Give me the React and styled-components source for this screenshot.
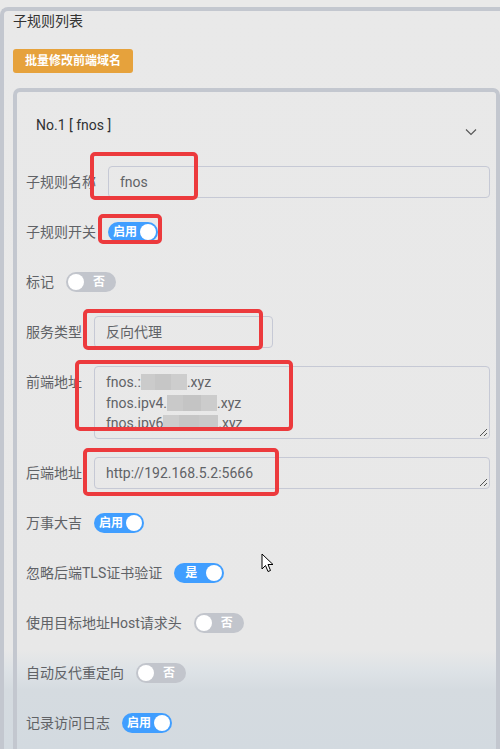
import React from "react";
import styled, { createGlobalStyle } from "styled-components";

const GlobalStyle = createGlobalStyle`
  html, body {
    margin: 0;
    padding: 0;
    overflow: hidden;
    background: #e8e8e8;
  }
  body {
    font-family: Roboto, "Noto Sans CJK SC", sans-serif;
  }
  * { box-sizing: border-box; }
`;

const Page = styled.div`
  position: relative;
  width: 500px;
  height: 749px;
  overflow: hidden;
  padding-top: 7px;
  background: linear-gradient(
    to bottom,
    #e9e9e9 0px,
    #e8e8e8 650px,
    #dde2e6 672px,
    #d5dbe0 690px,
    #d3dae0 749px
  );
`;

const Panel = styled.section`
  border: 4px solid #c3c7cf;
  border-right: none;
  border-bottom: none;
  border-radius: 8px 0 0 0;
  padding: 0 0 0 9px;
  height: 760px;
`;

const Title = styled.div`
  font-size: 14px;
  line-height: 20px;
  color: #333;
`;

const BatchButton = styled.button`
  display: block;
  margin-top: 18px;
  height: 24px;
  padding: 0 12px;
  border: none;
  border-radius: 3px;
  background: #e6a23c;
  color: #fff;
  font-family: Roboto, "Noto Sans CJK SC", sans-serif;
  font-size: 12px;
  font-weight: 700;
  line-height: 24px;
`;

const Card = styled.div`
  margin-top: 15px;
  border: 4px solid #c3c7cf;
  border-bottom: none;
  border-radius: 7px 7px 0 0;
  padding-top: 9px;
  height: 700px;
`;

const CardHeader = styled.div`
  display: flex;
  align-items: center;
  justify-content: space-between;
  height: 48px;
  padding: 0 19px;
  font-size: 14px;
  color: #303133;
`;

const Chevron = styled.svg`
  margin-top: 14px;
`;

const Form = styled.div`
  margin-top: 17px;
  padding: 0 6px 0 9px;
`;

const FormItem = styled.div`
  display: flex;
  align-items: flex-start;
  margin-bottom: 18px;
`;

const Label = styled.label`
  font-size: 14px;
  line-height: 32px;
  padding-right: 12px;
  color: #606266;
  white-space: nowrap;
`;

const Input = styled.div`
  height: 32px;
  ${(p) => (p.$width ? `width: ${p.$width}px;` : "flex: 1;")}
  border: 1px solid #c6c9d5;
  border-radius: 4px;
  padding: 0 ${(p) => p.$pad || 11}px;
  font-size: 14px;
  line-height: 30px;
  color: #606266;
`;

const TextArea = styled.div`
  position: relative;
  flex: 1;
  height: ${(p) => p.$height}px;
  border: 1px solid #c6c9d5;
  border-radius: 4px;
  padding: ${(p) => p.$padTop}px 11px 0;
  font-size: 14px;
  line-height: ${(p) => p.$lh}px;
  color: #606266;
  overflow: hidden;
`;

const Line = styled.div`
  white-space: nowrap;
  display: flex;
  align-items: center;
`;

const Mosaic = styled.span`
  display: inline-flex;
  height: 16px;
`;

const MosaicCell = styled.span`
  display: inline-block;
  height: 16px;
  width: ${(p) => p.$w}px;
  background: ${(p) => p.$c};
`;

const Grip = styled.svg`
  position: absolute;
  right: 1px;
  bottom: 1px;
`;

const ToggleWrap = styled.div`
  height: 32px;
  display: flex;
  align-items: center;
`;

const Track = styled.div`
  width: 50px;
  height: 20px;
  border-radius: 10px;
  background: ${(p) => (p.$on ? "#409eff" : "#c2c5cc")};
  display: flex;
  flex-direction: ${(p) => (p.$on ? "row" : "row-reverse")};
  align-items: center;
  padding: 0 2px;
`;

const TrackText = styled.span`
  flex: 1;
  text-align: center;
  color: #fff;
  font-size: 12px;
  font-weight: 700;
  line-height: 20px;
`;

const Knob = styled.span`
  width: 16px;
  height: 16px;
  border-radius: 50%;
  background: #fff;
  flex: none;
`;

const Mark = styled.div`
  position: absolute;
  border: 4px solid #ec3a3d;
  border-radius: 5px;
  pointer-events: none;
`;

const Cursor = styled.svg`
  position: absolute;
  left: 261px;
  top: 553px;
`;

function Toggle({ on, text }) {
  return (
    <ToggleWrap>
      <Track $on={on}>
        <TrackText>{text}</TrackText>
        <Knob />
      </Track>
    </ToggleWrap>
  );
}

function Blur({ cells }) {
  return (
    <Mosaic>
      {cells.map((c, i) => (
        <MosaicCell key={i} $w={c[0]} $c={c[1]} />
      ))}
    </Mosaic>
  );
}

function ResizeGrip() {
  return (
    <Grip width="9" height="9" viewBox="0 0 9 9">
      <path d="M8 1 L1 8 M8 5 L5 8" stroke="#555" strokeWidth="1" />
    </Grip>
  );
}

const marks = [
  { l: 90, t: 152, w: 108, h: 48 },
  { l: 98, t: 214, w: 64, h: 30 },
  { l: 83, t: 309, w: 180, h: 41 },
  { l: 75, t: 360, w: 218, h: 71 },
  { l: 83, t: 448, w: 196, h: 48 },
];

export default function App() {
  return (
    <>
      <GlobalStyle />
      <Page>
        <Panel>
          <Title>子规则列表</Title>
          <BatchButton>批量修改前端域名</BatchButton>
          <Card>
            <CardHeader>
              <span>No.1 [ fnos ]</span>
              <Chevron width="12" height="8" viewBox="0 0 12 8">
                <polyline points="1,1.5 6,6.5 11,1.5" fill="none" stroke="#555" strokeWidth="1.1" />
              </Chevron>
            </CardHeader>
            <Form>
              <FormItem>
                <Label>子规则名称</Label>
                <Input>fnos</Input>
              </FormItem>
              <FormItem>
                <Label>子规则开关</Label>
                <Toggle on text="启用" />
              </FormItem>
              <FormItem>
                <Label>标记</Label>
                <Toggle text="否" />
              </FormItem>
              <FormItem>
                <Label>服务类型</Label>
                <Input $width={179} $pad={11}>反向代理</Input>
              </FormItem>
              <FormItem>
                <Label>前端地址</Label>
                <TextArea $height={73} $padTop={5} $lh={20.5}>
                  <Line>
                    fnos.:
                    <Blur cells={[[14, "#cbcbcb"], [16, "#c6c6c6"], [16, "#cdcdcd"]]} />
                    .xyz
                  </Line>
                  <Line>
                    fnos.ipv4.
                    <Blur cells={[[16, "#c9c9c9"], [18, "#c4c4c4"], [16, "#cccccc"]]} />
                    .xyz
                  </Line>
                  <Line>
                    fnos.ipv6
                    <Blur cells={[[16, "#cdcdcd"], [20, "#c6c6c6"], [19, "#c9c9c9"]]} />
                    .xyz
                  </Line>
                  <ResizeGrip />
                </TextArea>
              </FormItem>
              <FormItem>
                <Label>后端地址</Label>
                <TextArea $height={32} $padTop={5} $lh={20}>
                  http://192.168.5.2:5666
                  <ResizeGrip />
                </TextArea>
              </FormItem>
              <FormItem>
                <Label>万事大吉</Label>
                <Toggle on text="启用" />
              </FormItem>
              <FormItem>
                <Label>忽略后端TLS证书验证</Label>
                <Toggle on text="是" />
              </FormItem>
              <FormItem>
                <Label>使用目标地址Host请求头</Label>
                <Toggle text="否" />
              </FormItem>
              <FormItem>
                <Label>自动反代重定向</Label>
                <Toggle text="否" />
              </FormItem>
              <FormItem>
                <Label>记录访问日志</Label>
                <Toggle on text="启用" />
              </FormItem>
            </Form>
          </Card>
        </Panel>
        {marks.map((m, i) => (
          <Mark key={i} style={{ left: m.l, top: m.t, width: m.w, height: m.h }} />
        ))}
        <Cursor width="13" height="20" viewBox="0 0 13 20">
          <path
            d="M1 1 L1 16 L4.5 12.5 L7 18.5 L9.5 17.5 L7 11.5 L12 11.5 Z"
            fill="#fff"
            stroke="#000"
            strokeWidth="1"
            strokeLinejoin="round"
          />
        </Cursor>
      </Page>
    </>
  );
}
